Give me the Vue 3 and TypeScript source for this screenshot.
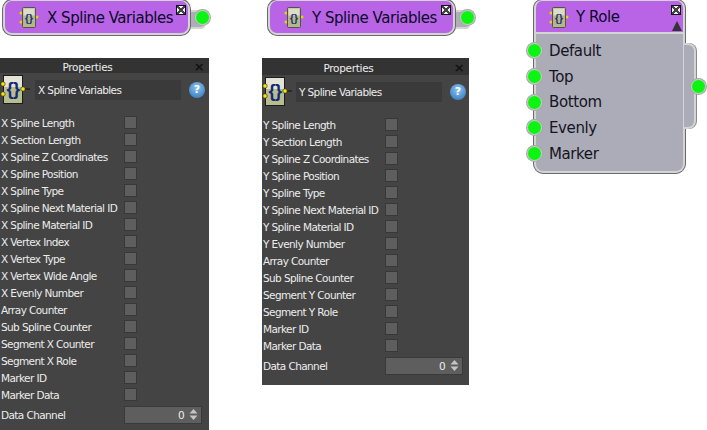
<template>
  <div class="canvas">
    <div
      v-for="n in nodes"
      :key="n.title"
      class="node"
      :style="{ left: n.x + 'px', width: n.width + 'px' }"
    >
      <div class="node-head">
        <svg class="node-icon" width="20" height="24" viewBox="0 0 20 24">
          <path d="M0 8h4M0 17h4M16 12h4" stroke="#8a8440" />
          <circle cx="2" cy="8" r="1.6" fill="#e0d020" />
          <circle cx="2" cy="17" r="1.6" fill="#e0d020" />
          <circle cx="18" cy="12" r="1.6" fill="#e0d020" />
          <rect x="3.5" y="2.5" width="13" height="20" rx="1" fill="#b4b78c" stroke="#54524a" />
          <rect x="4.5" y="3.5" width="11" height="7" fill="#dcdcc8" />
          <text x="10" y="17" text-anchor="middle" class="brace">{}</text>
        </svg>
        <span class="node-title">{{ n.title }}</span>
        <span class="node-close"></span>
      </div>
      <span class="pin out-pin"></span>
      <span class="out-tab"></span>
    </div>

    <div class="node role">
      <div class="node-head role-head">
        <svg class="node-icon" width="20" height="24" viewBox="0 0 20 24">
          <path d="M0 8h4M0 17h4M16 12h4" stroke="#8a8440" />
          <circle cx="2" cy="8" r="1.6" fill="#e0d020" />
          <circle cx="2" cy="17" r="1.6" fill="#e0d020" />
          <circle cx="18" cy="12" r="1.6" fill="#e0d020" />
          <rect x="3.5" y="2.5" width="13" height="20" rx="1" fill="#b4b78c" stroke="#54524a" />
          <rect x="4.5" y="3.5" width="11" height="7" fill="#dcdcc8" />
          <text x="10" y="17" text-anchor="middle" class="brace">{}</text>
        </svg>
        <span class="node-title">Y Role</span>
        <span class="node-close"></span>
        <span class="collapse"></span>
      </div>
      <div class="role-body">
        <div v-for="p in rolePins" :key="p" class="role-row">
          <span class="pin"></span>
          <span>{{ p }}</span>
        </div>
      </div>
      <span class="role-tab"></span>
      <span class="pin role-out"></span>
    </div>

    <section
      v-for="p in panels"
      :key="p.title"
      class="panel"
      :class="{ tight: p.tight }"
      :style="{ left: p.x + 'px', width: p.width + 'px', height: p.height + 'px' }"
    >
      <header class="panel-head" :style="{ height: p.headHeight + 'px', lineHeight: p.headHeight + 4 + 'px' }">
        <span class="panel-label">Properties</span>
        <span class="panel-x">×</span>
      </header>
      <div class="panel-name">
        <svg width="31" height="30" viewBox="0 0 31 30" class="panel-icon">
          <path d="M24 14h6" stroke="#111" />
          <rect x="3.5" y=".5" width="19" height="28" fill="#b9bd8e" stroke="#1c1c1c" />
          <rect x="4" y="1" width="18" height="11" fill="#e4e4d6" />
          <text x="13" y="20" text-anchor="middle" class="panel-brace">{}</text>
          <circle cx="3" cy="9" r="2.2" fill="#f4e800" stroke="#222" stroke-width=".6" />
          <circle cx="3" cy="19" r="2.2" fill="#f4e800" stroke="#222" stroke-width=".6" />
          <circle cx="23" cy="14" r="2.2" fill="#f4e800" stroke="#222" stroke-width=".6" />
        </svg>
        <div class="name-box">{{ p.title }}</div>
        <span class="help">?</span>
      </div>
      <div class="rows">
        <div v-for="r in p.rows" :key="r" class="row">
          <span class="row-label">{{ r }}</span>
          <span class="check"></span>
        </div>
        <div class="row spin-row">
          <span class="row-label">Data Channel</span>
          <div class="spinner">
            <span>0</span>
            <svg width="9" height="13" viewBox="0 0 9 13">
              <path d="M4.5 1 8.5 5.5H.5zM4.5 12 .5 7.5h8z" fill="#c4c4c4" />
            </svg>
          </div>
        </div>
      </div>
    </section>
  </div>
</template>

<script setup lang="ts">
interface NodeBox {
  title: string
  x: number
  width: number
}

interface Panel {
  title: string
  x: number
  width: number
  height: number
  headHeight: number
  tight: boolean
  rows: string[]
}

const nodes: NodeBox[] = [
  { title: 'X Spline Variables', x: 3, width: 189 },
  { title: 'Y Spline Variables', x: 268, width: 187 }
]

const rolePins = ['Default', 'Top', 'Bottom', 'Evenly', 'Marker']

const panels: Panel[] = [
  {
    title: 'X Spline Variables',
    x: 0,
    width: 209,
    height: 372,
    headHeight: 15,
    tight: false,
    rows: [
      'X Spline Length',
      'X Section Length',
      'X Spline Z Coordinates',
      'X Spline Position',
      'X Spline Type',
      'X Spline Next Material ID',
      'X Spline Material ID',
      'X Vertex Index',
      'X Vertex Type',
      'X Vertex Wide Angle',
      'X Evenly Number',
      'Array Counter',
      'Sub Spline Counter',
      'Segment X Counter',
      'Segment X Role',
      'Marker ID',
      'Marker Data'
    ]
  },
  {
    title: 'Y Spline Variables',
    x: 262,
    width: 207,
    height: 327,
    headHeight: 17,
    tight: true,
    rows: [
      'Y Spline Length',
      'Y Section Length',
      'Y Spline Z Coordinates',
      'Y Spline Position',
      'Y Spline Type',
      'Y Spline Next Material ID',
      'Y Spline Material ID',
      'Y Evenly Number',
      'Array Counter',
      'Sub Spline Counter',
      'Segment Y Counter',
      'Segment Y Role',
      'Marker ID',
      'Marker Data'
    ]
  }
]
</script>

<style>
html,
body {
  margin: 0;
  background: #fff;
}
</style>

<style scoped>
.canvas {
  position: relative;
  width: 707px;
  height: 430px;
  overflow: hidden;
  font-family: "Liberation Sans", Arial, sans-serif;
  background: #fff;
}

/* node boxes */
.node {
  position: absolute;
  top: 0;
  height: 35px;
  box-sizing: border-box;
}

.node-head {
  position: relative;
  display: flex;
  align-items: center;
  box-sizing: border-box;
  width: 187px;
  height: 35px;
  padding-left: 14px;
  background: #b964e6;
  border: 2px solid #d4d4d4;
  border-top-width: 1px;
  border-radius: 9px;
  box-shadow: 0 0 0 1px #6a6a6a;
  z-index: 1;
}

.node-icon {
  flex: none;
}

.brace {
  font: bold 10px "Liberation Sans", sans-serif;
  fill: #1c2c70;
}

.node-title {
  margin-left: 8px;
  padding-top: 1px;
  font-family: "DejaVu Sans", sans-serif;
  font-size: 15px;
  letter-spacing: -0.47px;
  color: #0a0a28;
}

.node-close {
  position: absolute;
  top: 4px;
  right: 2px;
  width: 8px;
  height: 8px;
  background:
    linear-gradient(45deg, transparent 40%, #444 40%, #444 60%, transparent 60%),
    linear-gradient(-45deg, transparent 40%, #444 40%, #444 60%, transparent 60%),
    #f0f0f0;
  border: 1px solid #111;
}

.pin {
  display: block;
  flex: none;
  width: 15px;
  height: 15px;
  box-sizing: border-box;
  background: #0cf512;
  border: 1px solid #d0d0d0;
  border-radius: 50%;
  box-shadow: 0 0 0 1px #a8a8a8;
}

.out-pin {
  position: absolute;
  top: 10px;
  left: 192px;
  z-index: 2;
}

.out-tab {
  position: absolute;
  top: 10px;
  left: 185px;
  width: 13px;
  height: 15px;
  background: #aeaeb8;
  border: 2px solid #d4d4d4;
  border-radius: 0 4px 4px 0;
}

.role {
  left: 534px;
  width: 153px;
  height: 173px;
}

.role-head {
  width: 151px;
  height: 34px;
  padding-left: 13px;
  border-width: 1px 2px 2px;
  border-radius: 8px 8px 0 0;
  box-shadow: 0 -1px 0 #6a6a6a, 1px 0 0 #6a6a6a, -1px 0 0 #6a6a6a;
}

.role-head .node-title {
  margin-left: 7px;
}

.collapse {
  position: absolute;
  top: 20px;
  right: 1px;
  width: 0;
  height: 0;
  border-left: 5px solid transparent;
  border-right: 5px solid transparent;
  border-bottom: 10px solid #333;
}

.role-body {
  box-sizing: border-box;
  width: 151px;
  height: 139px;
  padding-top: 4px;
  background: #acacb8;
  border: 2px solid #d4d4d4;
  border-top: none;
  border-radius: 0 0 9px 9px;
  box-shadow: 0 1px 0 #6a6a6a, 1px 0 0 #6a6a6a, -1px 0 0 #6a6a6a;
}

.role-row {
  display: flex;
  align-items: center;
  gap: 7px;
  height: 25.7px;
  margin-left: -9px;
  font-family: "DejaVu Sans", sans-serif;
  font-size: 15px;
  letter-spacing: -0.4px;
  color: #14141e;
}

.role-tab {
  position: absolute;
  top: 43px;
  left: 150px;
  width: 12px;
  height: 86px;
  box-sizing: border-box;
  background: #acacb8;
  border: 2px solid #d4d4d4;
  border-left: none;
  border-radius: 0 8px 8px 0;
  box-shadow: 1px 0 0 #8a8a8a;
}

.role-out {
  position: absolute;
  top: 79px;
  left: 157px;
}

/* properties panels */
.panel {
  position: absolute;
  top: 58px;
  box-sizing: border-box;
  background: #444;
  color: #ececec;
  font-family: "DejaVu Sans", sans-serif;
  font-size: 10.5px;
  letter-spacing: -0.6px;
}

.panel-head {
  position: relative;
  text-align: center;
  background: #333;
}

.panel-label {
  display: block;
  padding-right: 34px;
  letter-spacing: -0.3px;
}

.panel-x {
  position: absolute;
  top: -1px;
  right: 5px;
  font-size: 13px;
  font-weight: bold;
  color: #111;
}

.panel-name {
  display: flex;
  align-items: center;
  height: 34px;
}

.panel-icon {
  flex: none;
}

.panel-brace {
  font: bold 18px "Liberation Sans", sans-serif;
  fill: #102a78;
}

.name-box {
  box-sizing: border-box;
  width: 146px;
  height: 20px;
  margin-left: 4px;
  padding-left: 3px;
  line-height: 20px;
  background: #3a3a3a;
}

.tight .name-box {
  margin-left: 3px;
}

.help {
  width: 16px;
  height: 16px;
  margin-left: 8px;
  line-height: 16px;
  text-align: center;
  font-weight: bold;
  font-size: 11px;
  letter-spacing: 0;
  color: #fff;
  border-radius: 50%;
  background: radial-gradient(circle at 50% 35%, #8cc4f0, #2a72b8);
}

.rows {
  display: flex;
  flex-direction: column;
  padding-top: 7px;
}

.row {
  display: flex;
  align-items: center;
  height: 17px;
  padding-left: 1px;
}

.row-label {
  flex: none;
  width: 123px;
  white-space: nowrap;
}

.tight .row-label {
  width: 122px;
}

.check {
  box-sizing: border-box;
  width: 13px;
  height: 13px;
  background: #5e5e5e;
  border: 1px solid #383838;
}

.spin-row {
  height: 21px;
  margin-top: 1px;
}

.spinner {
  display: flex;
  align-items: center;
  justify-content: flex-end;
  gap: 5px;
  box-sizing: border-box;
  width: 78px;
  height: 18px;
  padding-right: 3px;
  background: #5e5e5e;
  border: 1px solid #3a3a3a;
}
</style>
